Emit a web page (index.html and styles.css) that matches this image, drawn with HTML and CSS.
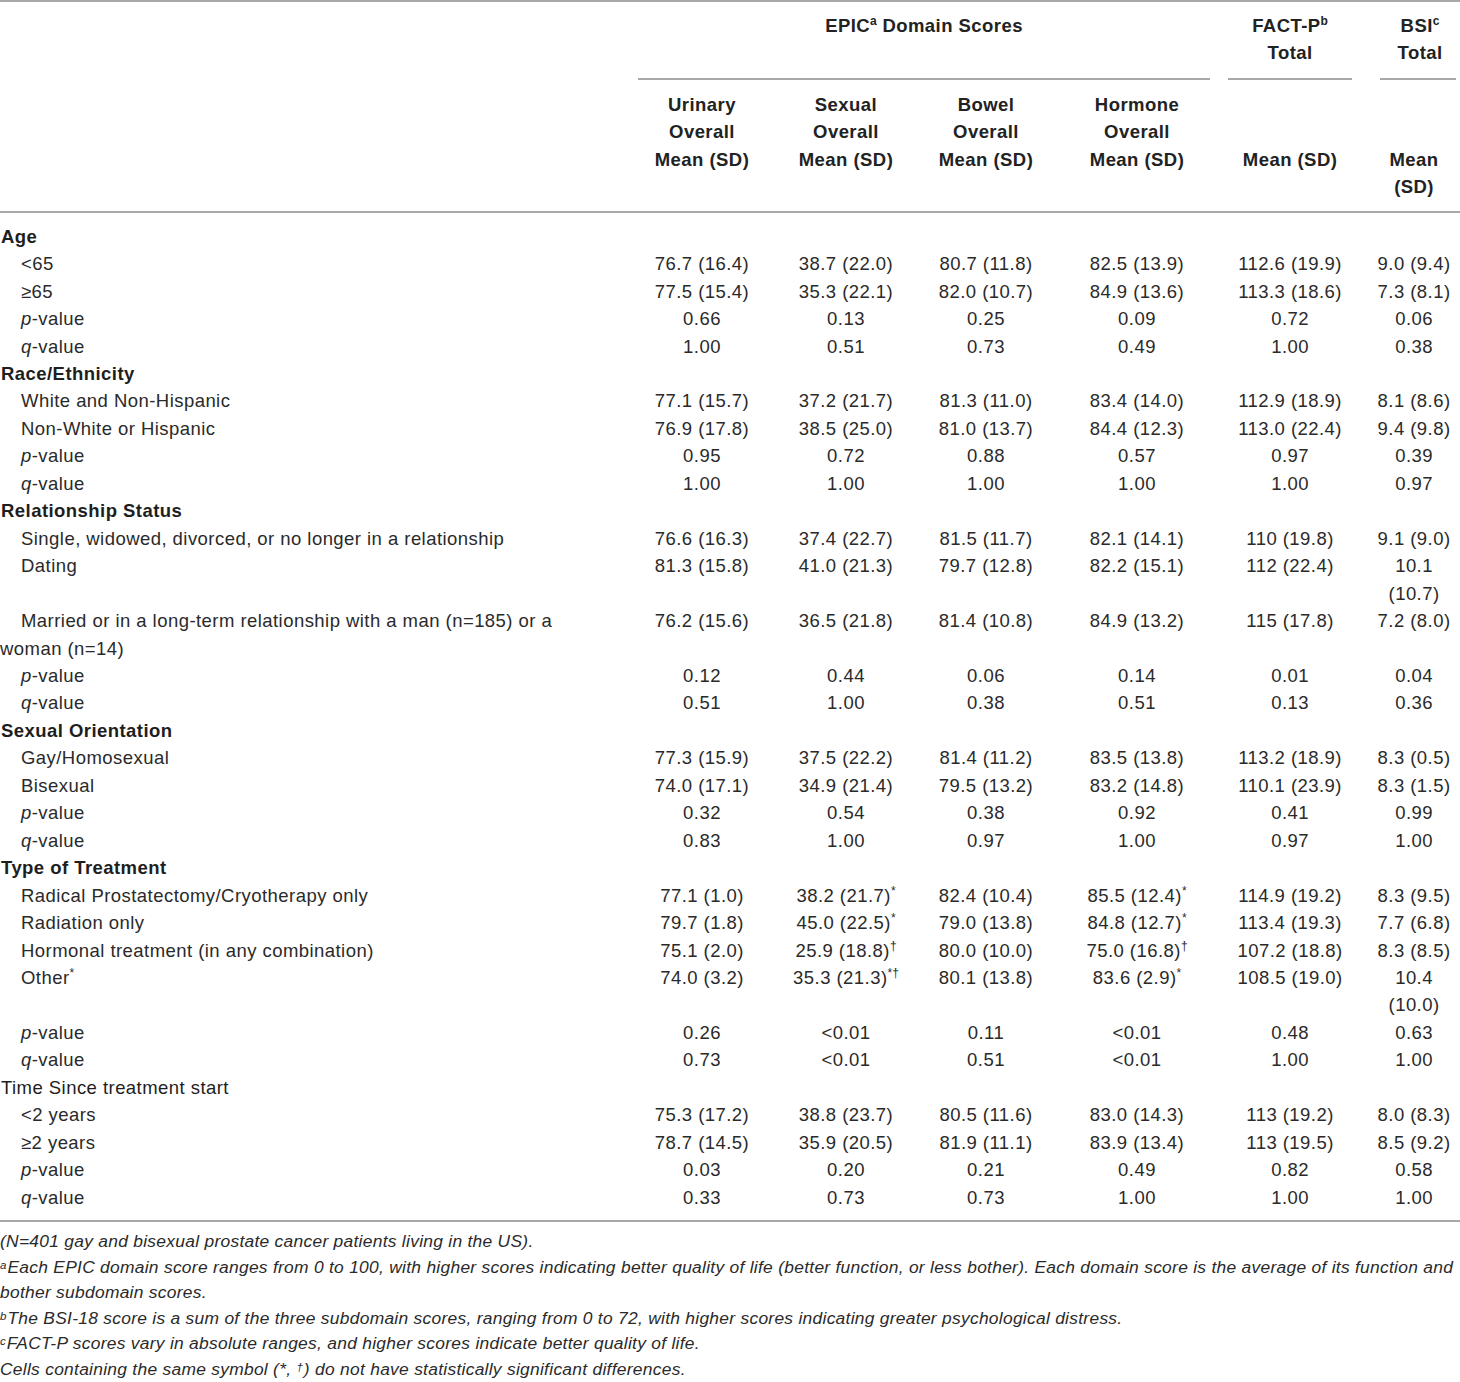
FILE: index.html
```html
<!DOCTYPE html>
<html>
<head>
<meta charset="utf-8">
<link rel="stylesheet" href="styles.css">
</head>
<body>
<div class="page">
<table class="data">
<colgroup>
<col class="c-label"><col class="c-uri"><col class="c-sex"><col class="c-bow"><col class="c-hor"><col class="c-fact"><col class="c-bsi">
</colgroup>
<thead>
<tr class="h1">
<th></th>
<th colspan="4"><div class="grp grp-epic">EPIC<sup>a</sup> Domain Scores<br>&nbsp;</div></th>
<th><div class="grp grp-fact">FACT-P<sup>b</sup><br>Total</div></th>
<th class="bsi"><div class="grp grp-bsi">BSI<sup>c</sup><br>Total</div></th>
</tr>
<tr class="h2">
<th></th>
<th>Urinary<br>Overall<br>Mean (SD)</th>
<th>Sexual<br>Overall<br>Mean (SD)</th>
<th>Bowel<br>Overall<br>Mean (SD)</th>
<th>Hormone<br>Overall<br>Mean (SD)</th>
<th><br><br>Mean (SD)</th>
<th class="bsi"><br><br>Mean<br>(SD)</th>
</tr>
</thead>
<tbody>
<tr class="first"><td class="cat">Age</td><td></td><td></td><td></td><td></td><td></td><td class="bsi"></td></tr>
<tr><td class="sub">&lt;65</td><td>76.7 (16.4)</td><td>38.7 (22.0)</td><td>80.7 (11.8)</td><td>82.5 (13.9)</td><td>112.6 (19.9)</td><td class="bsi">9.0 (9.4)</td></tr>
<tr><td class="sub">≥65</td><td>77.5 (15.4)</td><td>35.3 (22.1)</td><td>82.0 (10.7)</td><td>84.9 (13.6)</td><td>113.3 (18.6)</td><td class="bsi">7.3 (8.1)</td></tr>
<tr><td class="sub"><i>p</i>-value</td><td>0.66</td><td>0.13</td><td>0.25</td><td>0.09</td><td>0.72</td><td class="bsi">0.06</td></tr>
<tr><td class="sub"><i>q</i>-value</td><td>1.00</td><td>0.51</td><td>0.73</td><td>0.49</td><td>1.00</td><td class="bsi">0.38</td></tr>

<tr><td class="cat">Race/Ethnicity</td><td></td><td></td><td></td><td></td><td></td><td class="bsi"></td></tr>
<tr><td class="sub">White and Non-Hispanic</td><td>77.1 (15.7)</td><td>37.2 (21.7)</td><td>81.3 (11.0)</td><td>83.4 (14.0)</td><td>112.9 (18.9)</td><td class="bsi">8.1 (8.6)</td></tr>
<tr><td class="sub">Non-White or Hispanic</td><td>76.9 (17.8)</td><td>38.5 (25.0)</td><td>81.0 (13.7)</td><td>84.4 (12.3)</td><td>113.0 (22.4)</td><td class="bsi">9.4 (9.8)</td></tr>
<tr><td class="sub"><i>p</i>-value</td><td>0.95</td><td>0.72</td><td>0.88</td><td>0.57</td><td>0.97</td><td class="bsi">0.39</td></tr>
<tr><td class="sub"><i>q</i>-value</td><td>1.00</td><td>1.00</td><td>1.00</td><td>1.00</td><td>1.00</td><td class="bsi">0.97</td></tr>

<tr><td class="cat">Relationship Status</td><td></td><td></td><td></td><td></td><td></td><td class="bsi"></td></tr>
<tr><td class="sub">Single, widowed, divorced, or no longer in a relationship</td><td>76.6 (16.3)</td><td>37.4 (22.7)</td><td>81.5 (11.7)</td><td>82.1 (14.1)</td><td>110 (19.8)</td><td class="bsi">9.1 (9.0)</td></tr>
<tr><td class="sub">Dating</td><td>81.3 (15.8)</td><td>41.0 (21.3)</td><td>79.7 (12.8)</td><td>82.2 (15.1)</td><td>112 (22.4)</td><td class="bsi">10.1 (10.7)</td></tr>
<tr><td class="sub">Married or in a long-term relationship with a man (n=185) or a woman (n=14)</td><td>76.2 (15.6)</td><td>36.5 (21.8)</td><td>81.4 (10.8)</td><td>84.9 (13.2)</td><td>115 (17.8)</td><td class="bsi">7.2 (8.0)</td></tr>
<tr><td class="sub"><i>p</i>-value</td><td>0.12</td><td>0.44</td><td>0.06</td><td>0.14</td><td>0.01</td><td class="bsi">0.04</td></tr>
<tr><td class="sub"><i>q</i>-value</td><td>0.51</td><td>1.00</td><td>0.38</td><td>0.51</td><td>0.13</td><td class="bsi">0.36</td></tr>

<tr><td class="cat">Sexual Orientation</td><td></td><td></td><td></td><td></td><td></td><td class="bsi"></td></tr>
<tr><td class="sub">Gay/Homosexual</td><td>77.3 (15.9)</td><td>37.5 (22.2)</td><td>81.4 (11.2)</td><td>83.5 (13.8)</td><td>113.2 (18.9)</td><td class="bsi">8.3 (0.5)</td></tr>
<tr><td class="sub">Bisexual</td><td>74.0 (17.1)</td><td>34.9 (21.4)</td><td>79.5 (13.2)</td><td>83.2 (14.8)</td><td>110.1 (23.9)</td><td class="bsi">8.3 (1.5)</td></tr>
<tr><td class="sub"><i>p</i>-value</td><td>0.32</td><td>0.54</td><td>0.38</td><td>0.92</td><td>0.41</td><td class="bsi">0.99</td></tr>
<tr><td class="sub"><i>q</i>-value</td><td>0.83</td><td>1.00</td><td>0.97</td><td>1.00</td><td>0.97</td><td class="bsi">1.00</td></tr>

<tr><td class="cat">Type of Treatment</td><td></td><td></td><td></td><td></td><td></td><td class="bsi"></td></tr>
<tr><td class="sub">Radical Prostatectomy/Cryotherapy only</td><td>77.1 (1.0)</td><td>38.2 (21.7)<sup>*</sup></td><td>82.4 (10.4)</td><td>85.5 (12.4)<sup>*</sup></td><td>114.9 (19.2)</td><td class="bsi">8.3 (9.5)</td></tr>
<tr><td class="sub">Radiation only</td><td>79.7 (1.8)</td><td>45.0 (22.5)<sup>*</sup></td><td>79.0 (13.8)</td><td>84.8 (12.7)<sup>*</sup></td><td>113.4 (19.3)</td><td class="bsi">7.7 (6.8)</td></tr>
<tr><td class="sub">Hormonal treatment (in any combination)</td><td>75.1 (2.0)</td><td>25.9 (18.8)<sup>†</sup></td><td>80.0 (10.0)</td><td>75.0 (16.8)<sup>†</sup></td><td>107.2 (18.8)</td><td class="bsi">8.3 (8.5)</td></tr>
<tr><td class="sub">Other<sup>*</sup></td><td>74.0 (3.2)</td><td>35.3 (21.3)<sup>*†</sup></td><td>80.1 (13.8)</td><td>83.6 (2.9)<sup>*</sup></td><td>108.5 (19.0)</td><td class="bsi">10.4 (10.0)</td></tr>
<tr><td class="sub"><i>p</i>-value</td><td>0.26</td><td>&lt;0.01</td><td>0.11</td><td>&lt;0.01</td><td>0.48</td><td class="bsi">0.63</td></tr>
<tr><td class="sub"><i>q</i>-value</td><td>0.73</td><td>&lt;0.01</td><td>0.51</td><td>&lt;0.01</td><td>1.00</td><td class="bsi">1.00</td></tr>

<tr><td class="cat plain">Time Since treatment start</td><td></td><td></td><td></td><td></td><td></td><td class="bsi"></td></tr>
<tr><td class="sub">&lt;2 years</td><td>75.3 (17.2)</td><td>38.8 (23.7)</td><td>80.5 (11.6)</td><td>83.0 (14.3)</td><td>113 (19.2)</td><td class="bsi">8.0 (8.3)</td></tr>
<tr><td class="sub">≥2 years</td><td>78.7 (14.5)</td><td>35.9 (20.5)</td><td>81.9 (11.1)</td><td>83.9 (13.4)</td><td>113 (19.5)</td><td class="bsi">8.5 (9.2)</td></tr>
<tr><td class="sub"><i>p</i>-value</td><td>0.03</td><td>0.20</td><td>0.21</td><td>0.49</td><td>0.82</td><td class="bsi">0.58</td></tr>
<tr class="last"><td class="sub"><i>q</i>-value</td><td>0.33</td><td>0.73</td><td>0.73</td><td>1.00</td><td>1.00</td><td class="bsi">1.00</td></tr>
</tbody>
</table>
<div class="notes">
<p>(N=401 gay and bisexual prostate cancer patients living in the US).</p>
<p><sup>a</sup>Each EPIC domain score ranges from 0 to 100, with higher scores indicating better quality of life (better function, or less bother). Each domain score is the average of its function and bother subdomain scores.</p>
<p><sup>b</sup>The BSI-18 score is a sum of the three subdomain scores, ranging from 0 to 72, with higher scores indicating greater psychological distress.</p>
<p><sup>c</sup>FACT-P scores vary in absolute ranges, and higher scores indicate better quality of life.</p>
<p>Cells containing the same symbol (*, <sup>†</sup>) do not have statistically significant differences.</p>
</div>
</div>
</body>
</html>
```

FILE: styles.css
```css
html, body {
  margin: 0;
  padding: 0;
  background: #ffffff;
}

body {
  font-family: "Liberation Sans", Arial, sans-serif;
  color: #2a2a2a;
  font-size: 18.5px;
  letter-spacing: 0.45px;
}

.page {
  width: 1460px;
}

.data {
  width: 1460px;
  border-collapse: collapse;
  table-layout: fixed;
  border-top: 2px solid #a8a8a8;
  border-bottom: 2px solid #a8a8a8;
}

.c-label { width: 630px; }
.c-uri { width: 144px; }
.c-sex { width: 144px; }
.c-bow { width: 136px; }
.c-hor { width: 166px; }
.c-fact { width: 140px; }
.c-bsi { width: 100px; }

th, td {
  padding: 0;
  line-height: 27.45px;
  vertical-align: top;
  text-align: center;
}

th {
  font-weight: bold;
  color: #222;
}

sup {
  font-size: 0.65em;
  line-height: 0;
  vertical-align: 0.55em;
  letter-spacing: 0;
}

.h1 th {
  padding-top: 10px;
}

.grp {
  padding-bottom: 11px;
  border-bottom: 2px solid #a8a8a8;
}

.grp-epic { margin: 0 10px 0 8px; }
.grp-fact { margin: 0 8px; }
.grp-bsi { margin: 0 0 0 8px; padding-left: 4px; }

.h2 th {
  padding-top: 11px;
  padding-bottom: 10px;
  border-bottom: 2px solid #a8a8a8;
}

.bsi {
  padding-left: 12px;
  padding-right: 4px;
}

.first td {
  padding-top: 10px;
}

.last td {
  padding-bottom: 9px;
}

td.cat {
  text-align: left;
  font-weight: bold;
  color: #1e1e1e;
  padding-left: 1px;
}

td.cat.plain {
  font-weight: normal;
}

td.sub {
  text-align: left;
  text-indent: 21px;
  padding-right: 40px;
}

.notes {
  padding-top: 7px;
  font-style: italic;
  font-size: 17.4px;
  letter-spacing: 0.28px;
  line-height: 25.6px;
  color: #2a2a2a;
}

.notes p {
  margin: 0;
}

.notes sup {
  font-size: 0.66em;
  vertical-align: 0.35em;
  margin-right: 1px;
}
```
